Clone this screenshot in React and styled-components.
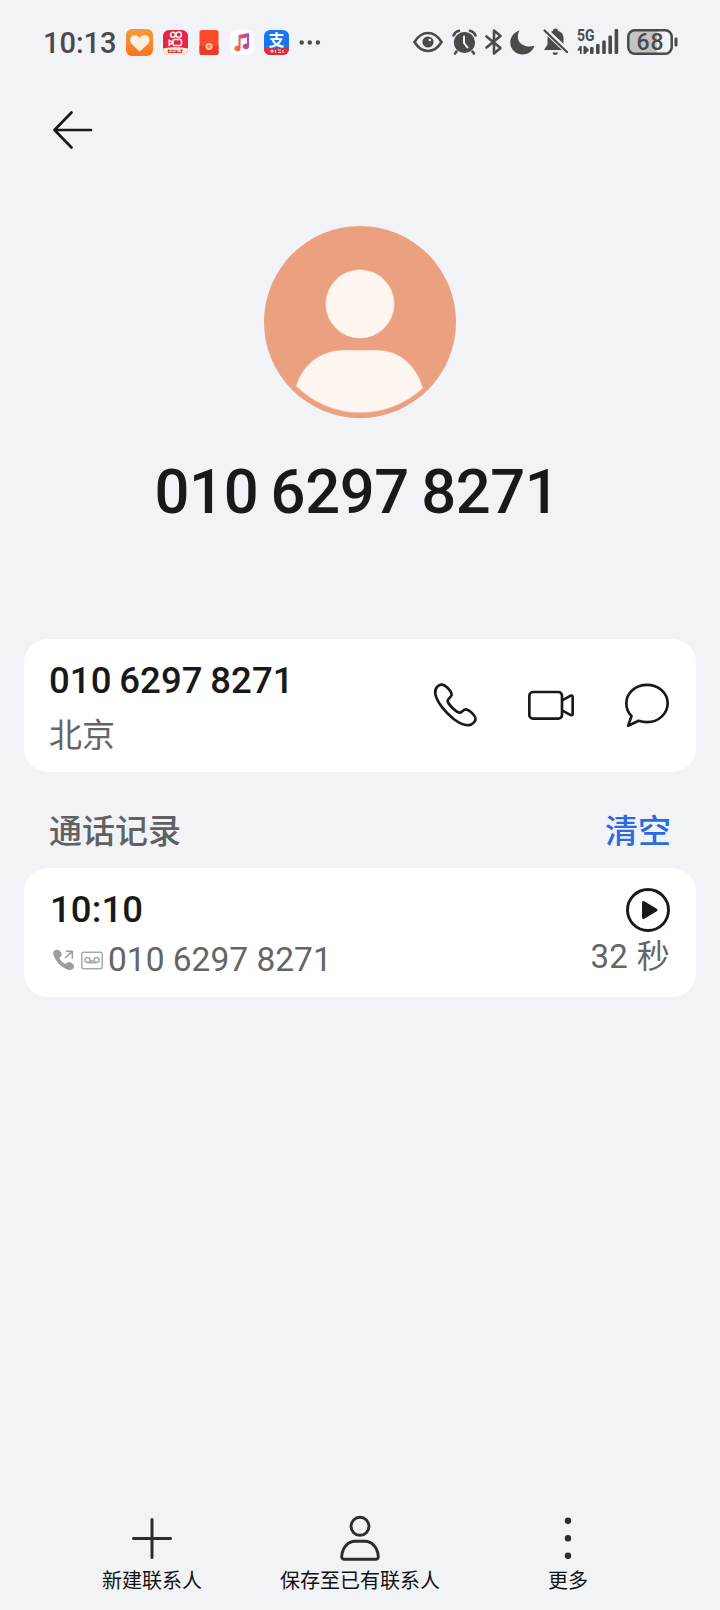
import React from "react";
import styled, { createGlobalStyle } from "styled-components";

const GlobalStyle = createGlobalStyle`
  * { box-sizing: border-box; }
  body { margin: 0; background: #f1f3f7; }
  svg { display: block; flex: none; overflow: visible; }
`;

const Screen = styled.div`
  width: 720px;
  height: 1610px;
  display: flex;
  flex-direction: column;
  background: #f1f3f7;
  color: #191919;
  font-family: Roboto, "Noto Sans CJK SC", sans-serif;
  overflow: hidden;
`;

const StatusBar = styled.header`
  height: 84px;
  display: flex;
  align-items: center;
  padding: 0 42px 0 43px;
  color: #4a4a4b;
`;

const Clock = styled.time`
  width: 83px;
  font-size: 29px;
  font-weight: 500;
  line-height: 40px;
  padding-top: 1px;
`;

const StatusIcons = styled.div`
  display: flex;
  align-items: center;
  gap: ${(p) => p.$gap}px;
  margin-left: ${(p) => (p.$end ? "auto" : "0")};
`;

const CallMarks = styled.div`
  display: flex;
  align-items: center;
  gap: 6px;
  margin-left: 4px;
`;

const TopBar = styled.nav`
  height: 92px;
  display: flex;
  align-items: center;
  padding-left: 52px;
`;

const IconButton = styled.button`
  border: 0;
  padding: 0;
  background: none;
  color: inherit;
  display: block;
`;

const Profile = styled.section`
  display: flex;
  flex-direction: column;
  align-items: center;
  padding-top: 50px;
  height: 463px;
`;

const Title = styled.h1`
  margin: 33px 0 0;
  padding-right: 6px;
  font-size: 61.5px;
  line-height: 82px;
  font-weight: 500;
  letter-spacing: -0.4px;
  word-spacing: -2.5px;
  white-space: nowrap;
`;

const Card = styled.section`
  display: flex;
  justify-content: space-between;
  height: ${(p) => p.$height}px;
  margin: 0 24px;
  padding: 0 26px 0 25px;
  border-radius: 24px;
  background: #fff;
`;

const Lines = styled.div`
  display: flex;
  flex-direction: column;
  align-items: ${(p) => (p.$end ? "flex-end" : "flex-start")};
  gap: ${(p) => p.$gap}px;
  padding-top: ${(p) => p.$top}px;
`;

const Primary = styled.div`
  font-size: 36.5px;
  line-height: 46px;
  font-weight: 500;
  letter-spacing: 0.1px;
  word-spacing: -1.5px;
  padding-left: ${(p) => p.$indent || 0}px;
  white-space: nowrap;
`;

const Secondary = styled.div`
  display: flex;
  align-items: center;
  font-size: 33px;
  line-height: 46px;
  color: #656565;
  white-space: pre;
  letter-spacing: ${(p) => p.$spacing || 0}px;
`;

const RecordNumber = styled.span`
  font-size: 33.5px;
  letter-spacing: 0;
  margin-left: 5px;
`;

const Actions = styled.div`
  display: flex;
  align-items: center;
  gap: 49px;
  padding-bottom: 2px;
`;

const SectionHeader = styled.div`
  height: 96px;
  display: flex;
  justify-content: space-between;
  align-items: flex-end;
  padding: 0 49px 12px;
  font-size: 33px;
  line-height: 48px;
  font-weight: 500;
`;

const SectionTitle = styled.h2`
  margin: 0;
  font: inherit;
  color: #616161;
`;

const ClearButton = styled.button`
  border: 0;
  padding: 0;
  background: none;
  font: inherit;
  color: #2a6be0;
`;

const BottomBar = styled.nav`
  margin-top: auto;
  height: 96px;
  display: grid;
  grid-template-columns: repeat(3, 208px);
  justify-content: center;
`;

const BottomItem = styled.button`
  border: 0;
  padding: 0;
  background: none;
  display: flex;
  flex-direction: column;
  align-items: center;
  color: #2c2d2e;
`;

const BottomLabel = styled.span`
  margin-top: 5px;
  font: 400 20px/28px Roboto, "Noto Sans CJK SC", sans-serif;
  color: #111;
  white-space: nowrap;
`;

const HeartApp = () => (
  <svg width="27" height="27" viewBox="0 0 27 27">
    <defs>
      <linearGradient id="heartBg" x2="0" y2="1"><stop stopColor="#f79a3c" /><stop offset="1" stopColor="#f9761b" /></linearGradient>
    </defs>
    <rect width="27" height="27" rx="6" fill="url(#heartBg)" />
    <path d="M13.7 22.500 6 15.300C2.800 12 4 7 8 6.300c2.500-.4 4.500.8 5.700 2.700C15 7 17 5.900 19.500 6.300c4.200.7 5.400 5.700 2.200 9Z" fill="#fff0df" />
  </svg>
);

const VideoApp = () => (
  <svg width="25" height="25" viewBox="0 0 25 25">
    <rect width="25" height="25" rx="6" fill="#ea2348" />
    <path d="M0 18.500q12.500-3 25 0V19a6 6 0 0 1-6 6H6a6 6 0 0 1-6-6Z" fill="#fff0dc" />
    <g fill="none" stroke="#fff" strokeWidth="1.500">
      <circle cx="10" cy="4.800" r="2.500" /><circle cx="15.700" cy="4.800" r="2.700" />
      <rect x="10" y="9.500" width="8.500" height="6" rx="1.500" /><path d="m10 12.500-3.800-2.200v4.600l3.800-2.200" />
    </g>
    <path d="M5.500 19.500v3.500M4.500 20.500h3M9 19.500v3.500M9 20.500h2.500M13 19.500v3.500M12.500 21h3M17 20h3M18.500 19.500V23M5 22.500h14" stroke="#e33b35" strokeWidth="1.200" />
  </svg>
);

const RedPacketApp = () => (
  <svg width="22" height="25" viewBox="-1.500 0 22 25">
    <rect width="19" height="25" rx="2.500" fill="#fa4b2a" />
    <path d="M0 15.500q9.500 3 19 0V22.500a2.500 2.500 0 0 1-2.500 2.500h-14A2.500 2.500 0 0 1 0 22.500Z" fill="#ee3a22" />
    <circle cx="9.500" cy="16.500" r="3.500" fill="#ffc69b" /><circle cx="9.500" cy="16.500" r="1.400" fill="#f27a4d" />
  </svg>
);

const MusicApp = () => (
  <svg width="24" height="25" viewBox="0 0 24 25">
    <defs>
      <linearGradient id="note" x1="0" x2="1" y1=".7" y2=".8"><stop stopColor="#f58b2a" /><stop offset=".5" stopColor="#dc4870" /><stop offset="1" stopColor="#a24cc5" /></linearGradient>
    </defs>
    <rect width="24" height="25" rx="6" fill="#fff" />
    <path d="M8.500 5 19 3V16.500a3.200 2.900 0 1 1-2-2.700V7.500l-6.500 1.300V18.500a3.200 2.900 0 1 1-2-2.700Z" fill="url(#note)" />
  </svg>
);

const PayApp = () => (
  <svg width="25" height="25" viewBox="0 0 25 25">
    <rect width="25" height="25" rx="6" fill="#1876f5" />
    <text x="12.500" y="15.800" textAnchor="middle" fontSize="16" fontWeight="700" fontFamily="Noto Sans CJK SC, sans-serif" fill="#fff">支</text>
    <path d="M0 17.500q12.500 2 25 0V19a6 6 0 0 1-6 6H6a6 6 0 0 1-6-6Z" fill="#e12e33" />
    <path d="M6 21h4M8 19.500v3.500M11.500 20v3M14 20h3M14 22.500h3M19 20v3" stroke="#ffd5d0" strokeWidth="1.100" />
  </svg>
);

const MoreDots = () => (
  <svg width="21" height="5" viewBox="0 0 21 5" fill="currentColor">
    <circle cx="2.700" cy="2.500" r="2.200" /><circle cx="10.800" cy="2.500" r="2.200" /><circle cx="18.900" cy="2.500" r="2.200" />
  </svg>
);

const EyeIcon = () => (
  <svg width="30" height="22" viewBox="0 0 30 22">
    <path d="M1.500 11Q7 2 15 2t13.500 9Q23 20 15 20T1.500 11Z" fill="none" stroke="currentColor" strokeWidth="2.600" />
    <circle cx="15" cy="11" r="5.600" fill="currentColor" /><circle cx="16.800" cy="9" r="1.300" fill="#f1f3f7" />
  </svg>
);

const AlarmIcon = () => (
  <svg width="25" height="26" viewBox="0 0 25 26">
    <circle cx="12.500" cy="13.500" r="10.600" fill="currentColor" />
    <path d="M1.500 6.500Q3 2.500 7 1.700M23.500 6.500Q22 2.500 18 1.700M4.500 22.500 3 24.500M20.500 22.500l1.500 2" fill="none" stroke="currentColor" strokeWidth="2.600" strokeLinecap="round" />
    <path d="M12 7.500v6.500l3.500 4.500" fill="none" stroke="#f1f3f7" strokeWidth="2" strokeLinecap="round" />
  </svg>
);

const BluetoothIcon = () => (
  <svg width="17" height="26" viewBox="0 0 17 26" fill="none" stroke="currentColor" strokeWidth="2.600" strokeLinecap="round" strokeLinejoin="round">
    <path d="m1.500 7.500 14 11.500L9 24.500v-23L15.500 7l-14 11.500" />
  </svg>
);

const MoonIcon = () => (
  <svg width="25" height="25" viewBox="0 0 25 25">
    <path d="M9.500.5C3.500 2.500.3 7.200.3 12.500.3 19.300 5.700 24.500 12.500 24.500c5.500 0 10-3 12-8.700C17.500 18 9 15 8 8.500 7.600 5.500 8 3 9.500.5Z" fill="currentColor" />
  </svg>
);

const MutedBellIcon = () => (
  <svg width="25" height="28" viewBox="0 0 25 28">
    <path d="M10 2.700Q10 .5 12.500.5T15 2.700Q20.500 4.500 20.500 10.500v6l3.500 5.500H1l3.500-5.500v-6Q4.500 4.500 10 2.700ZM9.500 24.500h5.500q-.5 2.500-2.800 2.500t-2.700-2.500Z" fill="currentColor" />
    <path d="m2 2 23 22" stroke="#f1f3f7" strokeWidth="5.500" />
    <path d="m1.500 2.500 22.500 21.500" stroke="currentColor" strokeWidth="2.200" strokeLinecap="round" />
  </svg>
);

const SignalIcon = () => (
  <svg width="42" height="26" viewBox="0 0 42 26" fill="currentColor">
    <text x="0" y="12" fontSize="16" fontWeight="700" fontFamily="Roboto, sans-serif" textLength="17.500" lengthAdjust="spacingAndGlyphs">5G</text>
    <path d="m0 21.500 3-4.500h1.700v8H3v-3.500Zm6.500-4.500h1.800l3.800 4-3.800 4H6.500Z" />
    <rect x="13" y="18" width="3.600" height="7" rx="1.200" /><rect x="19" y="15" width="3.600" height="10" rx="1.200" />
    <rect x="25.200" y="11.500" width="3.600" height="13.500" rx="1.200" /><rect x="31.400" y="6.500" width="3.600" height="18.500" rx="1.200" />
    <rect x="37.600" y="0" width="3.600" height="25" rx="1.200" />
  </svg>
);

const BatteryIcon = () => (
  <svg width="51" height="26" viewBox="0 0 51 26">
    <rect x="1.300" y="1.300" width="43.400" height="23.400" rx="6.500" fill="#f1f3f7" />
    <path d="M7.800 1.300H30v23.400H7.800a6.500 6.500 0 0 1-6.500-6.500V7.800a6.500 6.500 0 0 1 6.500-6.500Z" fill="#c2c3c5" />
    <rect x="1.300" y="1.300" width="43.400" height="23.400" rx="6.500" fill="none" stroke="currentColor" strokeWidth="2.500" />
    <rect x="47.500" y="8.500" width="3" height="9" rx="1.300" fill="currentColor" />
    <text x="23" y="21.200" textAnchor="middle" fontSize="23" fontWeight="500" fontFamily="Roboto, sans-serif" fill="currentColor" textLength="27">68</text>
  </svg>
);

const BackIcon = () => (
  <svg width="41" height="40" viewBox="0 0 41 40" fill="none" stroke="#191919" strokeWidth="2.700" strokeLinecap="round" strokeLinejoin="round">
    <path d="M19.500 2.500 2.500 20l17 17.500M3 20h36" />
  </svg>
);

const Avatar = () => (
  <svg width="192" height="192" viewBox="0 0 192 192">
    <circle cx="96" cy="96" r="96" fill="#eba080" />
    <g fill="#fff5f1" stroke="#fff5f1" strokeOpacity=".35" strokeWidth="1.500">
      <circle cx="96" cy="78" r="34" />
      <path d="M32.500 160C38 141 55 124.500 79 124.500h34c24 0 40 17.500 45.500 37.500A91 91 0 0 1 32.500 160Z" />
    </g>
  </svg>
);

const PhoneIcon = () => (
  <svg width="45" height="46" viewBox="100 155 135 138" fill="none" stroke="currentColor" strokeWidth="8" strokeLinejoin="round">
    <path d="M128 163C117 161 104 174 107 191C112 216 137 246 162 266C178 278 195 286 207 284.500C219 283 229 272 227.500 264C226 255 212 242 203 238C192 234 188 246 181 247C172 248 145 222 144 212C144 204 157 200 156 192C154 180 138 165 128 163Z" />
  </svg>
);

const VideoIcon = () => (
  <svg width="48" height="46" viewBox="384 155 144 138" fill="none" stroke="currentColor" strokeWidth="8" strokeLinejoin="round">
    <rect x="391" y="185" width="98" height="80" rx="11" />
    <path d="m489 210 25-13.500q7-3 7 3.500v50q0 6.500-7 3.500L489 240" />
  </svg>
);

const ChatIcon = () => (
  <svg width="46" height="46" viewBox="675 155 138 138" fill="none" stroke="currentColor" strokeWidth="8" strokeLinejoin="round">
    <path d="M687.500 286 697.500 257C686 246 682 233 682 219C682 188 709 163.500 744 163.500S806 188 806 219S779 275.500 744 275.500Q731 275.500 719 271.500Z" />
  </svg>
);

const PlayIcon = () => (
  <svg width="44" height="44" viewBox="0 0 44 44">
    <circle cx="22" cy="22" r="20.500" fill="none" stroke="currentColor" strokeWidth="2.900" />
    <path d="M17.500 14.500v15L30 22Z" fill="currentColor" stroke="currentColor" strokeWidth="3" strokeLinejoin="round" />
  </svg>
);

const OutgoingIcon = () => (
  <svg width="22" height="22" viewBox="130 265 66 66" fill="#9c9c9c">
    <path d="M138 268c9-4 19 7 18 14-1 6-8 7-6 12 3 6 10 13 16 15 5 1 7-5 12-5 8 0 18 10 15 16-3 8-11 9-18 7-22-7-40-29-44-47-1-6 2-10 7-12Z" />
    <path d="m166 292 22-20m-19 0h19v22" fill="none" stroke="#9c9c9c" strokeWidth="4.500" />
  </svg>
);

const VoicemailIcon = () => (
  <svg width="22" height="19" viewBox="0 0 22 19" fill="none" stroke="#aaa" strokeWidth="1.500">
    <rect x=".8" y="1.300" width="20.400" height="16.400" rx="2" />
    <circle cx="6.600" cy="9" r="2.500" /><circle cx="15.600" cy="9" r="2.500" /><path d="M6.600 11.800h3.600V9m1.800 0v2.800h3.600" />
  </svg>
);

const PlusIcon = () => (
  <svg width="48" height="48" viewBox="0 0 48 48" stroke="currentColor" strokeWidth="3" strokeLinecap="round">
    <path d="M5.500 24.500h37M24 5.500v38" />
  </svg>
);

const PersonIcon = () => (
  <svg width="48" height="48" viewBox="0 0 48 48" fill="none" stroke="currentColor" strokeWidth="2.900">
    <circle cx="24" cy="12.300" r="9" />
    <path d="M19 27.300h10c7 0 12.500 6 13.300 15q.1 3-2.800 3h-31q-2.900 0-2.800-3C6.500 33.300 12 27.300 19 27.300Z" />
  </svg>
);

const MenuIcon = () => (
  <svg width="48" height="48" viewBox="0 0 48 48" fill="currentColor">
    <circle cx="24" cy="6.700" r="3.200" /><circle cx="24" cy="24.300" r="3.200" /><circle cx="24" cy="41.800" r="3.200" />
  </svg>
);

export default function App() {
  return (
    <Screen>
      <GlobalStyle />
      <StatusBar>
        <Clock>10:13</Clock>
        <StatusIcons $gap={10}>
          <HeartApp />
          <VideoApp />
          <RedPacketApp />
          <MusicApp />
          <PayApp />
          <MoreDots />
        </StatusIcons>
        <StatusIcons $gap={8.300} $end>
          <EyeIcon />
          <AlarmIcon />
          <BluetoothIcon />
          <MoonIcon />
          <MutedBellIcon />
          <SignalIcon />
          <BatteryIcon />
        </StatusIcons>
      </StatusBar>
      <TopBar>
        <IconButton aria-label="返回"><BackIcon /></IconButton>
      </TopBar>
      <Profile>
        <Avatar />
        <Title>010 6297 8271</Title>
      </Profile>
      <Card $height={133}>
        <Lines $top={19} $gap={9}>
          <Primary>010 6297 8271</Primary>
          <Secondary>北京</Secondary>
        </Lines>
        <Actions>
          <IconButton aria-label="拨号"><PhoneIcon /></IconButton>
          <IconButton aria-label="视频"><VideoIcon /></IconButton>
          <IconButton aria-label="信息"><ChatIcon /></IconButton>
        </Actions>
      </Card>
      <SectionHeader>
        <SectionTitle>通话记录</SectionTitle>
        <ClearButton>清空</ClearButton>
      </SectionHeader>
      <Card $height={129}>
        <Lines $top={19} $gap={4}>
          <Primary $indent={1}>10:10</Primary>
          <Secondary>
            <CallMarks>
              <OutgoingIcon />
              <VoicemailIcon />
            </CallMarks>
            <RecordNumber>010 6297 8271</RecordNumber>
          </Secondary>
        </Lines>
        <Lines $top={20} $gap={2} $end>
          <PlayIcon />
          <Secondary $spacing={0.300}>32 秒</Secondary>
        </Lines>
      </Card>
      <BottomBar>
        <BottomItem><PlusIcon /><BottomLabel>新建联系人</BottomLabel></BottomItem>
        <BottomItem><PersonIcon /><BottomLabel>保存至已有联系人</BottomLabel></BottomItem>
        <BottomItem><MenuIcon /><BottomLabel>更多</BottomLabel></BottomItem>
      </BottomBar>
    </Screen>
  );
}
